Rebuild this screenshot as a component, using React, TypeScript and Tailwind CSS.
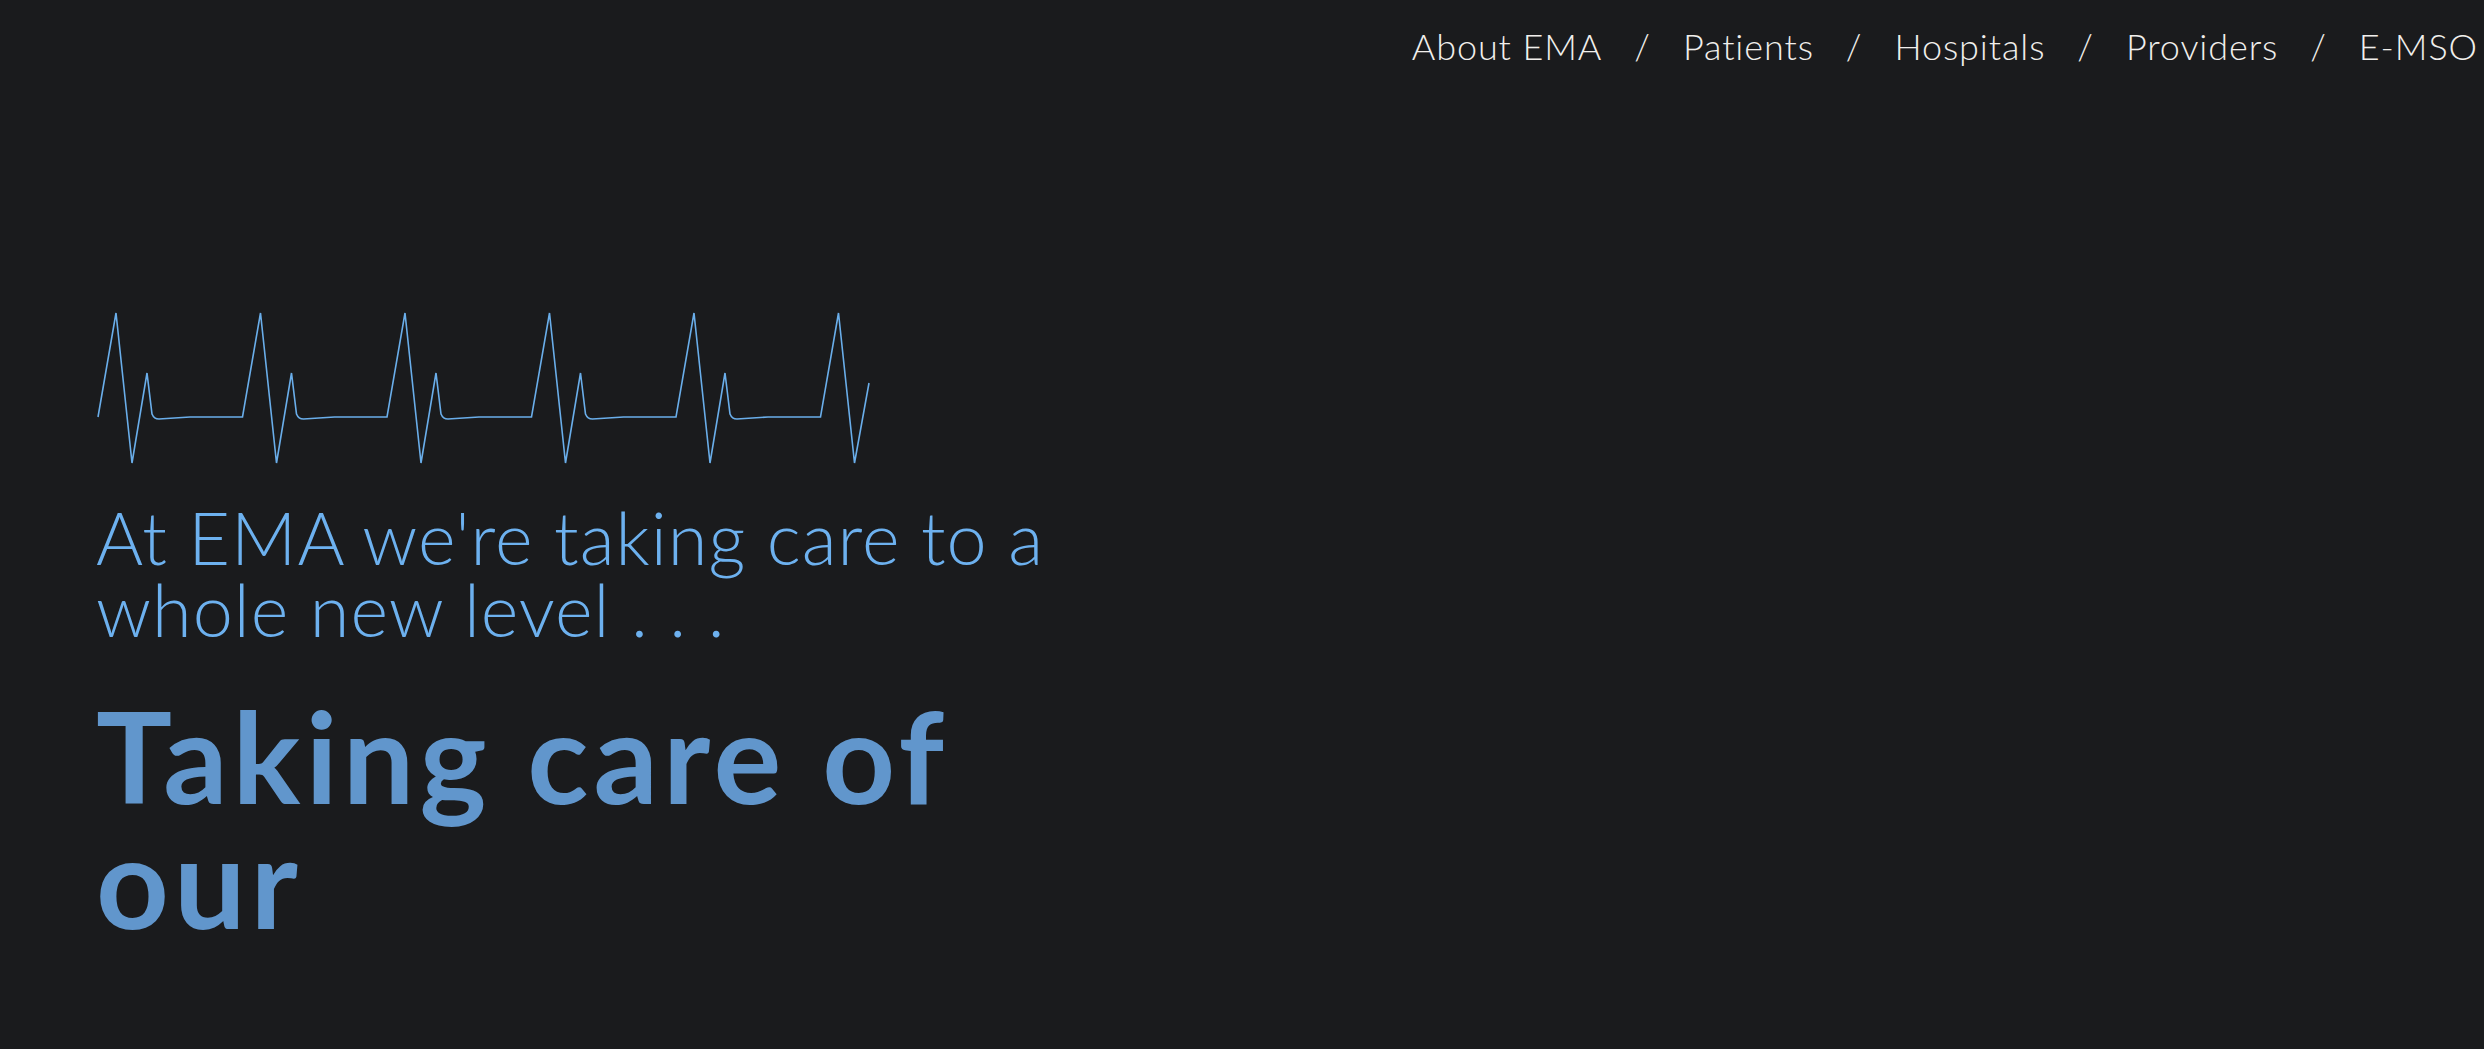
const links = ["About EMA", "Patients", "Hospitals", "Providers", "E-MSO"]

// heartbeat trace, one beat every 144.5px
function pulsePath() {
    const P = 144.5
    let d = "M8 117"
    for (let k = 0; k < 5; k++) {
        const s = 8 + k * P
        d += ` L${s + 18} 13 L${s + 34} 163 L${s + 49} 73 L${s + 54} 114 Q${s + 56} 119 ${s + 61} 119 L${s + 92} 117 L${s + P} 117`
    }
    const s = 8 + 5 * P
    d += ` L${s + 18} 13 L${s + 34} 163 L${s + 48.5} 83`
    return d
}

export default function App() {
    return (
        <div className="min-h-screen w-full bg-[#1a1b1d] font-['Lato',sans-serif]">
            <nav className="flex justify-end items-center pt-[28px] pr-[6px] text-[36px] leading-[36px] font-light tracking-[0.9px] text-[#f1efec]">
                {links.map((l, i) => (
                    <div key={l} className="flex items-center">
                        {i > 0 && <span className="px-[32px]">/</span>}
                        <a href="#">{l}</a>
                    </div>
                ))}
            </nav>

            <main className="pl-[96px]">
                <svg
                    width="782"
                    height="170"
                    viewBox="0 0 782 170"
                    className="block mt-[236px] ml-[-6px]"
                    fill="none"
                >
                    <path d={pulsePath()} stroke="#6aaeea" strokeWidth="1.6" strokeLinejoin="miter" />
                </svg>

                <div className="w-[1060px]">
                    <p className="mt-[31px] text-[72px] leading-[72px] font-light tracking-[1px] text-[#6db1ef]">
                        At EMA we're taking care to a whole new level . . .
                    </p>
                    <h1 className="mt-[48px] text-[127px] leading-[125px] font-bold tracking-[5px] text-[#6196cc]">
                        Taking care of our
                    </h1>
                </div>
            </main>
        </div>
    )
}
